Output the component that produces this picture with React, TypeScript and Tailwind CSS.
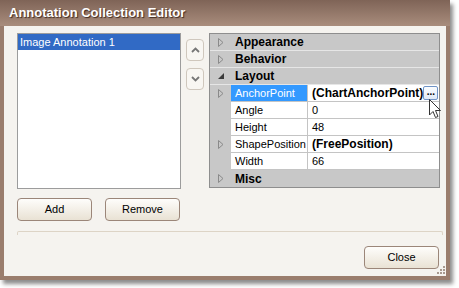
import { ReactNode } from "react";

const FONT = { fontFamily: '"Liberation Sans", Arial, sans-serif' };

function Gutter({ kind }: { kind?: "closed" | "open" }) {
  return (
    <div className="w-[21px] h-full flex items-center justify-center shrink-0">
      {kind === "closed" && (
        <svg width="6" height="9" viewBox="0 0 6 9">
          <path d="M0.5 0.5 L5 4.5 L0.5 8.5 Z" fill="none" stroke="#8a8a8a" strokeWidth="1" />
        </svg>
      )}
      {kind === "open" && (
        <svg width="6" height="6" viewBox="0 0 6 6">
          <path d="M6 0 L6 6 L0 6 Z" fill="#3a3a3a" />
        </svg>
      )}
    </div>
  );
}

function Category({ label, open }: { label: string; open?: boolean }) {
  return (
    <div className="flex h-[17px] border-b border-[#e6e6e6] items-center">
      <Gutter kind={open ? "open" : "closed"} />
      <div className="pl-[4px] font-bold text-[12px] text-black">{label}</div>
    </div>
  );
}

function Prop({
  name,
  value,
  bold,
  expandable,
  selected,
  extra,
}: {
  name: string;
  value: string;
  bold?: boolean;
  expandable?: boolean;
  selected?: boolean;
  extra?: ReactNode;
}) {
  return (
    <div className="flex h-[17px]">
      <Gutter kind={expandable ? "closed" : undefined} />
      <div
        className={`w-[77px] shrink-0 pl-[4px] text-[11px] leading-[16px] border-b border-r border-[#c4c4c4] ${
          selected ? "bg-[#3399ff] text-white" : "bg-white text-black"
        }`}
      >
        {name}
      </div>
      <div
        className={`flex-1 flex items-center pl-[4px] pr-[1px] bg-white border-b border-[#c4c4c4] text-black ${
          bold ? "font-bold text-[12px]" : "text-[11px]"
        }`}
      >
        <span className="flex-1">{value}</span>
        {extra}
      </div>
    </div>
  );
}

function Btn({ label, w }: { label: string; w: string }) {
  return (
    <div
      className={`${w} h-[23px] rounded-[4px] border border-[#9b8679] bg-gradient-to-b from-[#fefdfb] to-[#e9e2d4] flex items-center justify-center text-[11px] text-black`}
    >
      {label}
    </div>
  );
}

function Arrow({ up }: { up?: boolean }) {
  return (
    <div className="w-[18px] h-[22px] rounded-[4px] border border-[#cfc7bd] bg-[#f8f6f2] flex items-center justify-center">
      <svg width="9" height="6" viewBox="0 0 9 6">
        <path
          d={up ? "M1 5 L4.5 1.5 L8 5" : "M1 1 L4.5 4.5 L8 1"}
          fill="none"
          stroke="#767676"
          strokeWidth="1.8"
        />
      </svg>
    </div>
  );
}

export default function App() {
  return (
    <div className="w-[459px] h-[288px] bg-white relative" style={FONT}>
      <div className="w-[450px] h-[280px] flex flex-col bg-[#9a7d6d] shadow-[3px_4px_4px_rgba(0,0,0,0.45)]">
        {/* title bar */}
        <div className="h-[26px] shrink-0 bg-gradient-to-b from-[#7f6457] to-[#a98d7d] flex items-center pl-[9px]">
          <span className="text-white font-bold text-[13px] [text-shadow:1px_1px_1px_rgba(40,20,10,0.8)]">
            Annotation Collection Editor
          </span>
        </div>

        {/* body */}
        <div className="flex-1 mx-[4px] mb-[4px] bg-[#f5f3ef] relative pl-[13px] pt-[7px]">
          <div className="flex">
            <div className="w-[164px] flex flex-col">
              <div className="h-[156px] border border-[#9c9c9c] bg-white">
                <div className="h-[16px] bg-[#316ac5] text-white text-[11px] leading-[16px] pl-[2px]">
                  Image Annotation 1
                </div>
              </div>
              <div className="flex gap-[13px] mt-[9px]">
                <Btn label="Add" w="w-[75px]" />
                <Btn label="Remove" w="w-[75px]" />
              </div>
            </div>

            <div className="ml-[5px] pt-[6px] flex flex-col gap-[7px]">
              <Arrow up />
              <Arrow />
            </div>

            <div className="ml-[5px] w-[231px] h-[155px] border border-[#8e8e8e] bg-[#c8c8c8] flex flex-col">
              <Category label="Appearance" />
              <Category label="Behavior" />
              <Category label="Layout" open />
              <Prop
                name="AnchorPoint"
                value="(ChartAnchorPoint)"
                bold
                expandable
                selected
                extra={
                  <div className="w-[15px] h-[14px] rounded-[2px] border border-[#6f93c6] bg-gradient-to-b from-[#fbfdff] to-[#dfe9f6] text-[10px] leading-[9px] text-center text-black">
                    ...
                  </div>
                }
              />
              <Prop name="Angle" value="0" />
              <Prop name="Height" value="48" />
              <Prop name="ShapePosition" value="(FreePosition)" bold expandable />
              <Prop name="Width" value="66" />
              <div className="flex h-[17px] items-center">
                <Gutter kind="closed" />
                <div className="pl-[4px] font-bold text-[12px] text-black">Misc</div>
              </div>
            </div>
          </div>

          {/* separator */}
          <div className="mt-[10px] w-[426px] h-[4px] rounded-t-[2px] border border-b-0 border-[#ddd4c6]" />

          <div className="flex justify-end pr-[7px] mt-[11px]">
            <Btn label="Close" w="w-[75px]" />
          </div>

          {/* resize grip */}
          <svg className="absolute right-[0px] bottom-[1px]" width="9" height="9" viewBox="0 0 9 9">
            <rect x="6" y="0" width="2" height="2" fill="#a89a90" />
            <rect x="3" y="3" width="2" height="2" fill="#a89a90" />
            <rect x="6" y="3" width="2" height="2" fill="#a89a90" />
            <rect x="0" y="6" width="2" height="2" fill="#a89a90" />
            <rect x="3" y="6" width="2" height="2" fill="#a89a90" />
            <rect x="6" y="6" width="2" height="2" fill="#a89a90" />
          </svg>
        </div>
      </div>

      {/* mouse cursor */}
      <svg className="absolute left-[429px] top-[99px]" width="13" height="20" viewBox="0 0 13 20">
        <path
          d="M0.5 0.5 L0.5 16 L4 12.5 L6.5 18.5 L9 17.5 L6.5 11.5 L11.5 11.5 Z"
          fill="white"
          stroke="#333"
          strokeWidth="1"
          strokeLinejoin="round"
        />
      </svg>
    </div>
  );
}
